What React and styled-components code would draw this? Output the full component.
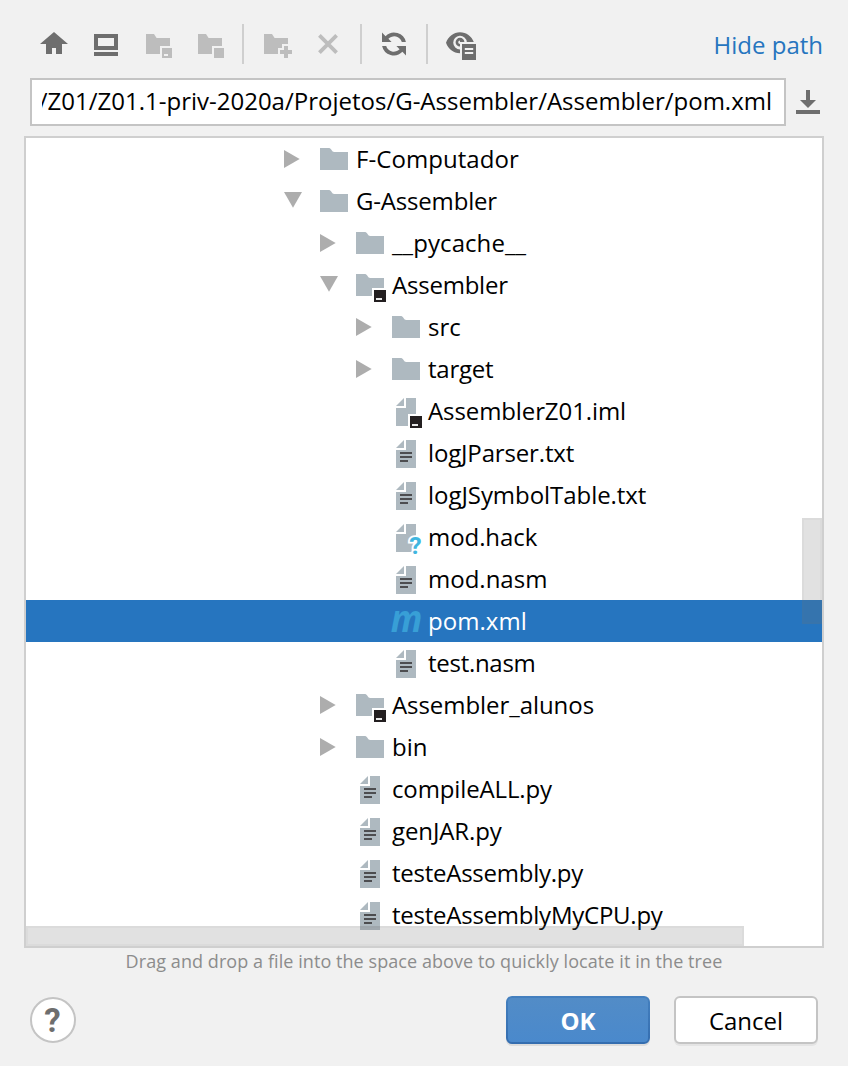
import React from "react";
import styled, { createGlobalStyle, css } from "styled-components";

const GlobalStyle = createGlobalStyle`
  *, *::before, *::after { box-sizing: border-box; }
  body { margin: 0; background: #f1f1f1; }
  button { font: inherit; padding: 0; cursor: pointer; }
`;

const Dialog = styled.main`
  display: flex;
  flex-direction: column;
  width: 848px;
  height: 1066px;
  padding: 24px 24px 22px;
  overflow: hidden;
  background: #f1f1f1;
  color: #000;
  font-family: "Open Sans", "Noto Sans", sans-serif;
  font-size: 24px;
  line-height: 42px;
`;

const Toolbar = styled.header`
  display: flex;
  align-items: center;
  height: 40px;
  padding: 0 1px 0 4px;
`;

const ToolButton = styled.button`
  display: flex;
  width: 32px;
  height: 32px;
  margin: 0 10px;
  border: 0;
  background: none;
  color: ${(p) => (p.disabled ? "#bdbdbd" : "#6e6e6e")};
`;

const Separator = styled.span`
  width: 2px;
  height: 40px;
  margin: 0 6px;
  background: #cfcfcf;
`;

const PathToggle = styled.a`
  margin-left: auto;
  padding-top: 2px;
  color: #2675bf;
`;

const PathRow = styled.div`
  display: flex;
  align-items: center;
  margin: 14px 0 10px 6px;
  height: 48px;
`;

const PathField = styled.div`
  width: 756px;
  height: 48px;
  padding: 0 12px 0 10px;
  border: 2px solid #c4c4c4;
  background: #fff;
`;

const PathText = styled.div`
  display: flex;
  justify-content: flex-end;
  overflow: hidden;
  white-space: nowrap;
`;

const HistoryButton = styled.button`
  display: flex;
  width: 32px;
  height: 32px;
  margin-left: 6px;
  border: 0;
  background: none;
  color: #6e6e6e;
`;

const TreePanel = styled.section`
  position: relative;
  height: 812px;
  border: 2px solid #cfcfcf;
  background: #fff;
  overflow: hidden;
`;

const TreeRow = styled.div`
  display: flex;
  height: 42px;
  padding-left: ${(p) => 258 + (p.$level - 1) * 36}px;
  white-space: nowrap;
  ${(p) => p.$selected && css`background: #2675bf; color: #fff;`}
`;

const ArrowSlot = styled.span`
  display: flex;
  flex: none;
  width: 34px;
  padding-top: 12px;
`;

const IconSlot = styled.span`
  display: flex;
  flex: none;
  width: 38px;
  padding-top: 6px;
`;

const EntryName = styled.span`
  letter-spacing: ${(p) => p.$tracking || 0}px;
`;

const Thumb = styled.span`
  position: absolute;
  background: rgba(115, 115, 115, 0.21);
  border: 2px solid rgba(115, 115, 115, 0.05);
`;

const VerticalThumb = styled(Thumb)`
  top: 380px;
  right: 0;
  width: 20px;
  height: 106px;
`;

const HorizontalThumb = styled(Thumb)`
  left: 0;
  bottom: 0;
  width: 718px;
  height: 20px;
`;

const Hint = styled.p`
  margin: 0;
  height: 26px;
  color: #8c8c8c;
  font-size: 18px;
  line-height: 26px;
  letter-spacing: 0.07px;
  text-align: center;
`;

const Footer = styled.footer`
  display: flex;
  align-items: center;
  height: 48px;
  margin: 22px 6px 0 5.5px;
  gap: 24px;
`;

const HelpButton = styled.button`
  width: 46px;
  height: 46px;
  margin-right: auto;
  border: 2px solid #c4c4c4;
  border-radius: 50%;
  background: #fff;
  color: #6e6e6e;
  && { font: 700 33px/43px Roboto, sans-serif; }
`;

const DialogButton = styled.button`
  width: 144px;
  height: 48px;
  border: 2px solid #c4c4c4;
  border-radius: 6px;
  background: #fff;
  color: #000;
  box-shadow: 0 2px 0 #e4e4e4;
  && { line-height: 46px; }
  ${(p) => p.$primary && css`
    background: linear-gradient(#528cc7, #4a89cc) padding-box, linear-gradient(#4480bf, #346daf) border-box;
    border-color: transparent;
    color: #fff;
    && { font-weight: 700; }
    box-shadow: 0 2px 0 #dcdcdc;
  `}
`;

const IconCanvas = styled.svg`
  flex: none;
  overflow: visible;
`;

const Glyph = ({ children }) => (
  <IconCanvas width="32" height="32" viewBox="0 0 16 16" fill="currentColor" aria-hidden="true">
    {children}
  </IconCanvas>
);

const HomeIcon = () => (
  <Glyph><path d="M8 2L15 8H12V13H9V10H7V13H4V8H1Z" /></Glyph>
);

const DesktopIcon = () => (
  <Glyph><path fillRule="evenodd" d="M2 3H14V11H2ZM4 5V9H12V5ZM2 12H14V14H2Z" /></Glyph>
);

const ProjectDirIcon = () => (
  <Glyph>
    <path d="M2 3H6L7.3 5H14V9H9V13H2Z" />
    <path fillRule="evenodd" d="M10 10H15V15H10ZM11 13V14H13V13Z" />
  </Glyph>
);

const ModuleDirIcon = () => (
  <Glyph>
    <path d="M2 3H6L7.3 5H14V9H9V13H2Z" />
    <path d="M10 10H15V15H10Z" />
  </Glyph>
);

const NewFolderIcon = () => (
  <Glyph>
    <path d="M2 3H6L7.3 5H14V8H11V10H9V13H2Z" />
    <path d="M12 9H14V11H16V13H14V15H12V13H10V11H12Z" />
  </Glyph>
);

const DeleteIcon = () => (
  <Glyph><path d="M3.7 3.7L12.3 12.3M12.3 3.7L3.7 12.3" fill="none" stroke="currentColor" strokeWidth="1.9" /></Glyph>
);

const RefreshIcon = () => (
  <Glyph>
    <path d="M2 2.3L3.8 4.1A6 6 0 0 1 13.95 7H11.9A4 4 0 0 0 5.2 5.4L6.8 7H2Z" />
    <path d="M14 13.7L12.2 11.9A6 6 0 0 1 2.05 9H4.1A4 4 0 0 0 10.8 10.6L9.2 9H14Z" />
  </Glyph>
);

const ShowHiddenIcon = () => (
  <Glyph>
    <path d="M8 2.1C4.8 2.1 2.1 4.2 1 7.4C2.1 10.5 4.7 12.6 8 12.6V10.7A3.4 3.4 0 1 1 11.4 7H14.9C13.8 4.1 11.2 2.1 8 2.1Z" />
    <path fillRule="evenodd" d="M8 9.3A2.2 2.2 0 1 1 10.2 7H8ZM8 6.2A0.9 0.9 0 1 0 8 8Z" />
    <path fillRule="evenodd" d="M9 8H16V16H9ZM10.4 10V11H14.6V10ZM10.4 12V13H14.6V12Z" />
  </Glyph>
);

const HistoryIcon = () => (
  <Glyph><path d="M7 2H9V7H12L8 11L4 7H7ZM2 12H14V14H2Z" /></Glyph>
);

const Arrow = ({ open }) => (
  <svg width="18" height="18" viewBox="0 0 18 18" fill="#adadad" aria-hidden="true">
    <path d={open ? "M0 0H18L9 15.7Z" : "M0 0V18L15.7 9Z"} />
  </svg>
);

const ModuleBadge = () => (
  <>
    <path d="M9 9H16V16H9Z" fill="#fff" />
    <path d="M10 10H16V16H10Z" fill="#231f20" />
    <path d="M11 14H14V15H11Z" fill="#e8e8e8" />
  </>
);

const FolderIcon = ({ module }) => (
  <Glyph>
    <path d="M1 2H5.6C6.6 2 6.9 4 8.1 4H15V13H1Z" fill="#aeb9c0" />
    {module && <ModuleBadge />}
  </Glyph>
);

const PageShape = () => <path d="M7 1L3 5H7ZM8 1V6H3V15H13V1Z" fill="#aeb9c0" />;

const QuestionBadge = styled.text`
  font: 700 12.4px Roboto, sans-serif;
  fill: #40b6e0;
  stroke: #fff;
  stroke-width: 1.8px;
  paint-order: stroke;
`;

const MavenLetter = styled.text`
  font: italic 700 18.5px "Open Sans", sans-serif;
  fill: #389fd6;
`;

const icons = {
  folder: () => <FolderIcon />,
  moduleFolder: () => <FolderIcon module />,
  moduleFile: () => <Glyph><PageShape /><ModuleBadge /></Glyph>,
  text: () => (
    <Glyph><PageShape /><path d="M5 7H11V8H5ZM5 9H11V10H5ZM5 11H9V12H5Z" fill="#4d4d50" /></Glyph>
  ),
  unknown: () => <Glyph><PageShape /><QuestionBadge x="9.6" y="15.9">?</QuestionBadge></Glyph>,
  maven: () => (
    <Glyph><MavenLetter x="0.4" y="12.9" textLength="15.8" lengthAdjust="spacingAndGlyphs">m</MavenLetter></Glyph>
  ),
};

const entries = [
  { name: "F-Computador", level: 1, icon: "folder", open: false, tracking: 0.06 },
  { name: "G-Assembler", level: 1, icon: "folder", open: true, tracking: -0.18 },
  { name: "__pycache__", level: 2, icon: "folder", open: false, tracking: 0.08 },
  { name: "Assembler", level: 2, icon: "moduleFolder", open: true, tracking: -0.22 },
  { name: "src", level: 3, icon: "folder", open: false },
  { name: "target", level: 3, icon: "folder", open: false, tracking: -0.25 },
  { name: "AssemblerZ01.iml", level: 3, icon: "moduleFile", tracking: -0.1 },
  { name: "logJParser.txt", level: 3, icon: "text", tracking: -0.15 },
  { name: "logJSymbolTable.txt", level: 3, icon: "text", tracking: -0.05 },
  { name: "mod.hack", level: 3, icon: "unknown", tracking: -0.07 },
  { name: "mod.nasm", level: 3, icon: "text" },
  { name: "pom.xml", level: 3, icon: "maven", selected: true, tracking: 0.05 },
  { name: "test.nasm", level: 3, icon: "text", tracking: -0.28 },
  { name: "Assembler_alunos", level: 2, icon: "moduleFolder", open: false, tracking: -0.06 },
  { name: "bin", level: 2, icon: "folder", open: false },
  { name: "compileALL.py", level: 2, icon: "text", tracking: -0.13 },
  { name: "genJAR.py", level: 2, icon: "text", tracking: -0.1 },
  { name: "testeAssembly.py", level: 2, icon: "text", tracking: -0.25 },
  { name: "testeAssemblyMyCPU.py", level: 2, icon: "text", tracking: -0.24 },
];

const Entry = ({ entry }) => {
  const Icon = icons[entry.icon];
  return (
    <TreeRow $level={entry.level} $selected={entry.selected}>
      <ArrowSlot>{entry.open !== undefined && <Arrow open={entry.open} />}</ArrowSlot>
      <IconSlot><Icon /></IconSlot>
      <EntryName $tracking={entry.tracking}>{entry.name}</EntryName>
    </TreeRow>
  );
};

export default function App() {
  return (
    <Dialog>
      <GlobalStyle />
      <Toolbar>
        <ToolButton aria-label="Home"><HomeIcon /></ToolButton>
        <ToolButton aria-label="Desktop"><DesktopIcon /></ToolButton>
        <ToolButton aria-label="Project directory" disabled><ProjectDirIcon /></ToolButton>
        <ToolButton aria-label="Module directory" disabled><ModuleDirIcon /></ToolButton>
        <Separator />
        <ToolButton aria-label="New folder" disabled><NewFolderIcon /></ToolButton>
        <ToolButton aria-label="Delete" disabled><DeleteIcon /></ToolButton>
        <Separator />
        <ToolButton aria-label="Refresh"><RefreshIcon /></ToolButton>
        <Separator />
        <ToolButton aria-label="Show hidden files"><ShowHiddenIcon /></ToolButton>
        <PathToggle>Hide path</PathToggle>
      </Toolbar>
      <PathRow>
        <PathField>
          <PathText>/Z01/Z01.1-priv-2020a/Projetos/G-Assembler/Assembler/pom.xml</PathText>
        </PathField>
        <HistoryButton aria-label="Recent paths"><HistoryIcon /></HistoryButton>
      </PathRow>
      <TreePanel>
        {entries.map((entry) => <Entry key={entry.name} entry={entry} />)}
        <VerticalThumb />
        <HorizontalThumb />
      </TreePanel>
      <Hint>Drag and drop a file into the space above to quickly locate it in the tree</Hint>
      <Footer>
        <HelpButton aria-label="Help">?</HelpButton>
        <DialogButton $primary>OK</DialogButton>
        <DialogButton>Cancel</DialogButton>
      </Footer>
    </Dialog>
  );
}
